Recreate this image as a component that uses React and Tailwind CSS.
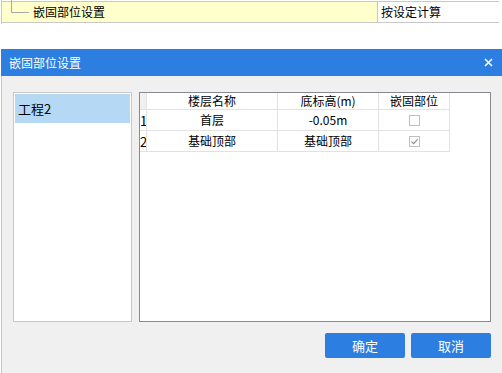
export default function App() {
  const cell = "border-r border-b border-[#e2e2e2] flex items-center justify-center text-[12px] text-black leading-none";
  const Check = ({ checked }) => (
    <div className="w-[11px] h-[11px] border border-[#bfbfbf] bg-white flex items-center justify-center">
      {checked && (
        <svg width="9" height="9" viewBox="0 0 9 9">
          <path d="M1.5 4.5 L3.6 6.6 L7.6 2.4" fill="none" stroke="#8c8c8c" strokeWidth="1.1" />
        </svg>
      )}
    </div>
  );
  const rows = [
    { n: "1", name: "首层", h: "-0.05m", c: false },
    { n: "2", name: "基础顶部", h: "基础顶部", c: true },
  ];
  return (
    <div className="w-[502px] h-[373px] bg-white overflow-hidden font-['Noto_Sans_CJK_SC','Microsoft_YaHei',sans-serif]">
      {/* top property row */}
      <div className="ml-px w-[498px] h-[24px] border-l border-[#c8c8c8] pt-px">
        <div className="flex h-[22px] border-y border-[#c8c8c8]">
          <div className="relative w-[376px] bg-[#ffffcc] border-r border-[#c8c8c8] flex items-center pl-[31px] text-[12px] leading-none text-black">
            <svg className="absolute left-[8px] top-[-2px]" width="20" height="14" viewBox="0 0 20 14">
              <path d="M1.5 0 V12.5 H19" fill="none" stroke="#a8a8a8" strokeWidth="1" />
            </svg>
            嵌固部位设置
          </div>
          <div className="flex-1 pl-[3px] flex items-center text-[12px] leading-none text-black">按设定计算</div>
        </div>
      </div>

      {/* dialog */}
      <div className="mt-[25px] ml-px w-[501px] h-[324px] flex flex-col">
        <div className="h-[27px] bg-[#2c7fe1] flex items-center justify-between pl-[8px] pr-[9px] text-white text-[12px] leading-none">
          <span>嵌固部位设置</span>
          <svg width="9" height="9" viewBox="0 0 9 9">
            <path d="M1 1 L8 8 M8 1 L1 8" stroke="white" strokeWidth="1.6" />
          </svg>
        </div>
        <div className="flex-1 bg-[#f0f0f0] border-l border-[#c8c8c8] pl-[11px] pr-[11px] pt-[16px] flex flex-col">
          <div className="flex gap-[7px] h-[230px]">
            <div className="w-[119px] h-full border border-[#c8c8c8] bg-white p-px">
              <div className="h-[29px] bg-[#b5d8f4] pl-[3px] flex items-center text-[13px] leading-none text-black">工程2</div>
            </div>
            <div className="w-[352px] h-full border border-[#868a8e] bg-white">
              <div className="flex h-[17px]">
                <div className={`${cell} w-[7px] bg-[#f0f0f0]`}></div>
                <div className={`${cell} w-[131px]`}>楼层名称</div>
                <div className={`${cell} w-[101px]`}>底标高(m)</div>
                <div className={`${cell} w-[71px]`}>嵌固部位</div>
              </div>
              {rows.map((r) => (
                <div key={r.n} className="flex h-[21px]">
                  <div className="border-r border-b border-[#e2e2e2] w-[7px] flex items-center text-[13px] leading-none text-black overflow-hidden">{r.n}</div>
                  <div className={`${cell} w-[131px]`}>{r.name}</div>
                  <div className={`${cell} w-[101px]`}>{r.h}</div>
                  <div className={`${cell} w-[71px]`}>
                    <Check checked={r.c} />
                  </div>
                </div>
              ))}
            </div>
          </div>
          <div className="mt-[11px] flex justify-end gap-[6px]">
            <button className="w-[80px] h-[25px] bg-[#2c7fe1] rounded-[2px] text-white text-[13px] leading-none">确定</button>
            <button className="w-[80px] h-[25px] bg-[#2c7fe1] rounded-[2px] text-white text-[13px] leading-none">取消</button>
          </div>
        </div>
      </div>
    </div>
  );
}
